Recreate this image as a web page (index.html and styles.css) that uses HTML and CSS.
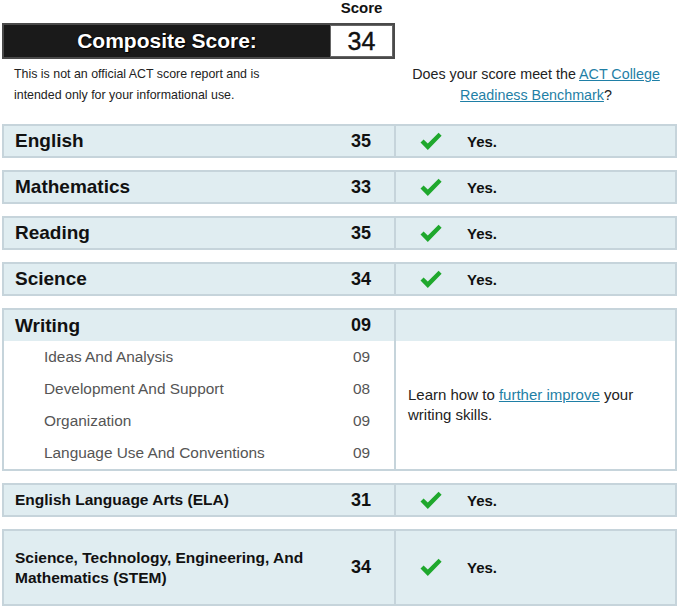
FILE: index.html
```html
<!DOCTYPE html>
<html>
<head>
<meta charset="utf-8">
<link rel="stylesheet" href="styles.css">
</head>
<body>
<div class="page">
  <div class="composite">
    <div class="score-label">Score</div>
    <div class="bar">
      <div class="bar-title">Composite Score:</div>
      <div class="bar-score">34</div>
    </div>
  </div>
  <div class="info">
    <p class="disclaimer">This is not an official ACT score report and is<br>intended only for your informational use.</p>
    <p class="bench">Does your score meet the <a href="#">ACT College<br>Readiness Benchmark</a>?</p>
  </div>

  <div class="row">
    <div class="cell-left"><span class="subject">English</span><span class="score">35</span></div>
    <div class="cell-right"><svg class="check" width="22" height="19" viewBox="0 0 22 19"><path d="M0.5 10.5 L3.6 7.4 L7.8 11.4 L18.6 0.8 L21.6 3.8 L7.8 18 Z" fill="#1fa82d"/></svg><span class="yes">Yes.</span></div>
  </div>
  <div class="row">
    <div class="cell-left"><span class="subject">Mathematics</span><span class="score">33</span></div>
    <div class="cell-right"><svg class="check" width="22" height="19" viewBox="0 0 22 19"><path d="M0.5 10.5 L3.6 7.4 L7.8 11.4 L18.6 0.8 L21.6 3.8 L7.8 18 Z" fill="#1fa82d"/></svg><span class="yes">Yes.</span></div>
  </div>
  <div class="row">
    <div class="cell-left"><span class="subject">Reading</span><span class="score">35</span></div>
    <div class="cell-right"><svg class="check" width="22" height="19" viewBox="0 0 22 19"><path d="M0.5 10.5 L3.6 7.4 L7.8 11.4 L18.6 0.8 L21.6 3.8 L7.8 18 Z" fill="#1fa82d"/></svg><span class="yes">Yes.</span></div>
  </div>
  <div class="row">
    <div class="cell-left"><span class="subject">Science</span><span class="score">34</span></div>
    <div class="cell-right"><svg class="check" width="22" height="19" viewBox="0 0 22 19"><path d="M0.5 10.5 L3.6 7.4 L7.8 11.4 L18.6 0.8 L21.6 3.8 L7.8 18 Z" fill="#1fa82d"/></svg><span class="yes">Yes.</span></div>
  </div>

  <div class="row writing">
    <div class="w-left">
      <div class="w-head"><span class="subject">Writing</span><span class="score">09</span></div>
      <div class="w-sub"><span>Ideas And Analysis</span><span>09</span></div>
      <div class="w-sub"><span>Development And Support</span><span>08</span></div>
      <div class="w-sub"><span>Organization</span><span>09</span></div>
      <div class="w-sub"><span>Language Use And Conventions</span><span>09</span></div>
    </div>
    <div class="w-right">
      <div class="w-head-r"></div>
      <div class="w-note"><p>Learn how to <a href="#">further improve</a> your<br>writing skills.</p></div>
    </div>
  </div>

  <div class="row">
    <div class="cell-left"><span class="subject small">English Language Arts (ELA)</span><span class="score">31</span></div>
    <div class="cell-right"><svg class="check" width="22" height="19" viewBox="0 0 22 19"><path d="M0.5 10.5 L3.6 7.4 L7.8 11.4 L18.6 0.8 L21.6 3.8 L7.8 18 Z" fill="#1fa82d"/></svg><span class="yes">Yes.</span></div>
  </div>
  <div class="row tall">
    <div class="cell-left"><span class="subject small">Science, Technology, Engineering, And<br>Mathematics (STEM)</span><span class="score">34</span></div>
    <div class="cell-right"><svg class="check" width="22" height="19" viewBox="0 0 22 19"><path d="M0.5 10.5 L3.6 7.4 L7.8 11.4 L18.6 0.8 L21.6 3.8 L7.8 18 Z" fill="#1fa82d"/></svg><span class="yes">Yes.</span></div>
  </div>
</div>
</body>
</html>
```

FILE: styles.css
```css
* { box-sizing: border-box; }
body {
  margin: 0;
  background: #fff;
  font-family: "Liberation Sans", Arial, sans-serif;
  color: #111;
}
.page {
  width: 677px;
  padding-left: 2px;
}
.composite {
  width: 393px;
}
.score-label {
  height: 23px;
  width: 63px;
  margin-left: 328px;
  text-align: center;
  font-weight: bold;
  font-size: 15px;
  line-height: 15px;
}
.bar {
  display: flex;
  height: 36px;
  background: #1a1a1a;
  border: 2px solid #4a4a4a;
}
.bar-title {
  flex: 1;
  text-align: center;
  color: #fff;
  font-weight: bold;
  font-size: 21px;
  line-height: 32px;
  text-shadow: 0 0 2px #000, 1px 1px 1px #000;
}
.bar-score {
  width: 63px;
  background: #fff;
  border: 1px solid #666;
  text-align: center;
  font-size: 25px;
  line-height: 30px;
  color: #111;
  -webkit-text-stroke: 0.4px #111;
}
.info {
  display: grid;
  grid-template-columns: 393px 282px;
  padding-top: 5px;
  height: 65px;
}
.info p {
  margin: 0;
  line-height: 21px;
}
.disclaimer {
  font-size: 12.4px;
  padding-left: 12px;
  color: #222;
}
.bench {
  font-size: 14.3px;
  text-align: center;
  color: #222;
}
a {
  color: #1f7fa6;
  text-decoration: underline;
}
.row {
  display: grid;
  grid-template-columns: 392px 1fr;
  border: 2px solid #c6d4db;
  background: #e0edf1;
  margin-bottom: 12px;
  height: 34px;
}
.cell-left {
  display: flex;
  align-items: center;
  justify-content: space-between;
  padding: 0 23px 0 11px;
  border-right: 2px solid #c6d4db;
}
.subject {
  font-weight: bold;
  font-size: 19px;
}
.subject.small {
  font-size: 15.5px;
  line-height: 20px;
}
.score {
  font-weight: bold;
  font-size: 18px;
}
.cell-right {
  display: flex;
  align-items: center;
  padding-left: 24px;
}
.check {
  display: block;
  margin-right: 25px;
}
.yes {
  font-weight: bold;
  font-size: 15px;
}
.row.tall {
  height: 77px;
}
.row.writing {
  height: auto;
  background: #fff;
}
.w-left {
  border-right: 2px solid #c6d4db;
}
.w-head {
  display: flex;
  align-items: center;
  justify-content: space-between;
  height: 31px;
  padding: 0 23px 0 11px;
  background: #e0edf1;
}
.w-sub {
  display: flex;
  justify-content: space-between;
  height: 32px;
  line-height: 32px;
  padding: 0 24px 0 40px;
  font-size: 15.4px;
  color: #555;
}
.w-right {
  display: flex;
  flex-direction: column;
}
.w-head-r {
  height: 31px;
  background: #e0edf1;
}
.w-note {
  flex: 1;
  display: flex;
  align-items: center;
  padding-left: 12px;
}
.w-note p {
  margin: 0;
  font-size: 15px;
  line-height: 20px;
  color: #222;
}
```
